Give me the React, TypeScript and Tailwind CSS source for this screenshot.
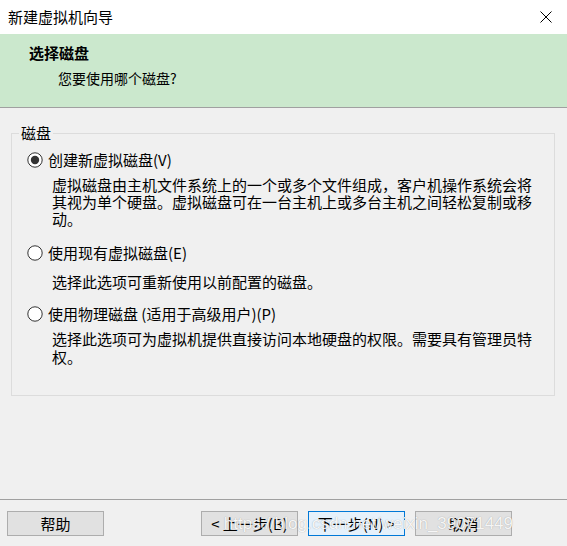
import React from "react";

const FONT = { fontFamily: '"Noto Sans CJK SC", "Noto Sans", sans-serif' };

function Radio({ checked }: { checked?: boolean }) {
  return (
    <svg width="16" height="16" viewBox="0 0 16 16" className="shrink-0">
      <circle cx="8" cy="8" r="7.2" fill="#ffffff" stroke="#333333" strokeWidth="1" />
      {checked && <circle cx="8" cy="8" r="4.2" fill="#333333" />}
    </svg>
  );
}

function Btn({ children, primary }: { children: React.ReactNode; primary?: boolean }) {
  return (
    <div
      className={
        primary
          ? "w-[97px] h-[25px] flex items-center justify-center border border-[#0078d7] bg-[#e5f1fb] text-[15px] leading-none text-black"
          : "w-[97px] h-[25px] flex items-center justify-center border border-[#adadad] bg-[#e1e1e1] text-[15px] leading-none text-black"
      }
    >
      {children}
    </div>
  );
}

export default function App() {
  return (
    <div className="relative w-[567px] h-[546px] flex flex-col bg-[#f0f0f0] overflow-hidden text-black" style={FONT}>
      {/* title bar */}
      <div className="h-[34px] bg-white flex items-center justify-between pl-[8px] pr-[15px]">
        <span className="text-[15px] leading-[20px]">新建虚拟机向导</span>
        <svg width="12" height="12" viewBox="0 0 12 12">
          <path d="M0.5 0.5 L11.5 11.5 M11.5 0.5 L0.5 11.5" stroke="#000" strokeWidth="1" />
        </svg>
      </div>

      {/* header */}
      <div className="h-[74px] bg-[#cbe8cd] border-b border-[#a0a0a0] flex flex-col">
        <div className="pl-[29px] pt-[10px] text-[15px] leading-[18px] font-bold">选择磁盘</div>
        <div className="pl-[58px] pt-[7px] text-[14px] leading-[18px]">您要使用哪个磁盘?</div>
      </div>

      {/* body */}
      <fieldset className="mt-[16px] ml-[11px] mr-[12px] border border-[#dcdcdc] pt-[8px] pb-[29px]">
        <legend className="ml-[7px] px-[2px] text-[15px] leading-[18px]">磁盘</legend>

        <div className="flex items-center h-[20px] pl-[15px] gap-[5px]">
          <Radio checked />
          <span className="text-[15px] leading-[20px]">创建新虚拟磁盘(V)</span>
        </div>
        <div className="mt-[6px] pl-[40px] pr-[20px] text-[15px] leading-[17px]">
          虚拟磁盘由主机文件系统上的一个或多个文件组成，客户机操作系统会将其视为单个硬盘。虚拟磁盘可在一台主机上或多台主机之间轻松复制或移动。
        </div>

        <div className="mt-[16px] flex items-center h-[20px] pl-[15px] gap-[5px]">
          <Radio />
          <span className="text-[15px] leading-[20px]">使用现有虚拟磁盘(E)</span>
        </div>
        <div className="mt-[10px] pl-[40px] pr-[20px] text-[15px] leading-[17px]">
          选择此选项可重新使用以前配置的磁盘。
        </div>

        <div className="mt-[14px] flex items-center h-[20px] pl-[15px] gap-[5px]">
          <Radio />
          <span className="text-[15px] leading-[20px]">使用物理磁盘 (适用于高级用户)(P)</span>
        </div>
        <div className="mt-[6px] pl-[40px] pr-[20px] text-[15px] leading-[18px]">
          选择此选项可为虚拟机提供直接访问本地硬盘的权限。需要具有管理员特权。
        </div>
      </fieldset>

      <div className="flex-1" />

      {/* footer */}
      <div className="border-t border-[#a0a0a0] pt-[11px] pb-[10px] flex items-center pl-[7px] pr-[55px]">
        <Btn>帮助</Btn>
        <div className="flex-1" />
        <div className="flex items-center gap-[10px]">
          <Btn>&lt; 上一步(B)</Btn>
          <Btn primary>下一步(N) &gt;</Btn>
          <Btn>取消</Btn>
        </div>
      </div>

      {/* watermark overlay */}
      <div
        className="absolute right-[54px] bottom-[12px] text-[17px] leading-[20px] text-white/90 pointer-events-none whitespace-nowrap"
        style={{ fontFamily: '"Liberation Sans", Arial, sans-serif', textShadow: "0 0 1px rgba(0,0,0,0.35)" }}
      >
        https://blog.csdn.net/weixin_39071449
      </div>
    </div>
  );
}
